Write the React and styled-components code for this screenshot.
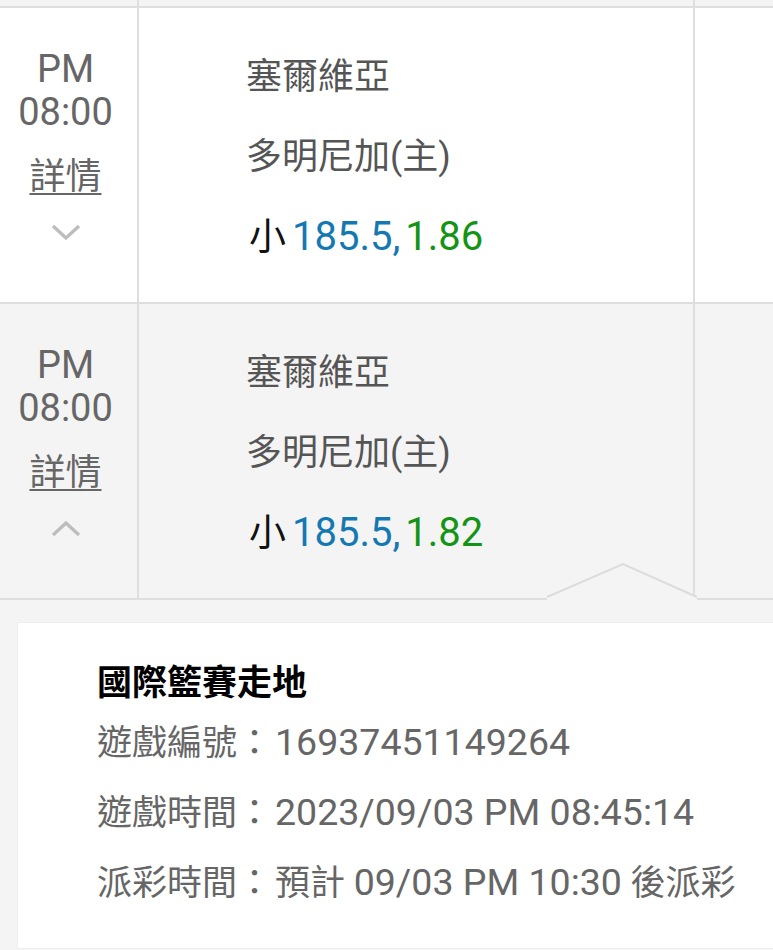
import styled, { createGlobalStyle } from 'styled-components';

const GlobalStyle = createGlobalStyle`
  html, body {
    margin: 0;
    padding: 0;
    background: #f4f4f4;
  }
  body {
    font-family: Roboto, "Noto Sans CJK TC", "Noto Sans", sans-serif;
    -webkit-font-smoothing: antialiased;
  }
`;

const rows = [
  { home: '塞爾維亞', away: '多明尼加(主)', line: '185.5', odds: '1.86', open: false },
  { home: '塞爾維亞', away: '多明尼加(主)', line: '185.5', odds: '1.82', open: true },
];

function App() {
  return (
    <Page>
      <GlobalStyle />
      <Row $shade $stub>
        <Cell />
        <Cell />
        <Cell $last />
      </Row>
      {rows.map((r, i) => (
        <Row key={i} $shade={r.open}>
          <Cell $time>
            <TimeBlock>
              <span>PM</span>
              <span>08:00</span>
            </TimeBlock>
            <Detail>詳情</Detail>
            <Chevron $up={r.open} />
          </Cell>
          <Cell>
            <Teams>
              <Team>{r.home}</Team>
              <Team>{r.away}</Team>
              <Odds>
                <span className='side'>小</span>
                <span className='line'>{r.line},</span>
                <span className='price'>{r.odds}</span>
              </Odds>
            </Teams>
          </Cell>
          <Cell $last />
        </Row>
      ))}
      <DetailArea>
        <Caret width='156' height='40' viewBox='0 0 156 40'>
          <rect x='2' y='33' width='150' height='7' fill='#f4f4f4' />
          <polygon points='2,35 78,2 152,35' fill='#f4f4f4' />
          <polyline points='2,35 78,2 152,35' fill='none' stroke='#dcdcdc' strokeWidth='2' />
        </Caret>
        <Card>
          <CardTitle>國際籃賽走地</CardTitle>
          <InfoLine>遊戲編號：<Value $lead>16937451149264</Value></InfoLine>
          <InfoLine>遊戲時間：<Value $lead>2023/09/03 PM 08:45:14</Value></InfoLine>
          <InfoLine>
            派彩時間：<Note>預計</Note> <Value>09/03 PM 10:30</Value> 後派彩
          </InfoLine>
        </Card>
      </DetailArea>
    </Page>
  );
}

function Chevron({ $up }) {
  return (
    <ChevronSvg width='32' height='20' viewBox='0 0 32 20'>
      <polyline
        points={$up ? '3,17 16,5 29,17' : '3,4 16,16 29,4'}
        fill='none'
        stroke='#bdbdbd'
        strokeWidth='3.4'
      />
    </ChevronSvg>
  );
}

export default App;

const Page = styled.div`
  width: 773px;
  min-height: 950px;
  background: #f4f4f4;
  overflow: hidden;
`;

const Row = styled.div`
  display: grid;
  grid-template-columns: 139px 556px 1fr;
  background: ${(p) => (p.$shade ? '#f4f4f4' : '#ffffff')};
  border-bottom: 2px solid #dedede;
  height: ${(p) => (p.$stub ? '6px' : 'auto')};
`;

const Cell = styled.div`
  display: flex;
  flex-direction: column;
  align-items: center;
  padding-right: ${(p) => (p.$time ? '6px' : '0')};
  border-right: ${(p) => (p.$last ? 'none' : '2px solid #dedede')};
`;

const TimeBlock = styled.div`
  display: flex;
  flex-direction: column;
  align-items: center;
  padding-top: 40px;
  color: #666;
  font-size: 38px;
  line-height: 43px;
`;

const Detail = styled.a`
  margin-top: 22px;
  color: #666;
  font-size: 36px;
  line-height: 43px;
  text-decoration: underline;
  text-decoration-thickness: 2px;
  text-underline-offset: 4px;
`;

const ChevronSvg = styled.svg`
  display: block;
  margin-top: 23px;
  margin-bottom: 24px;
`;

const Teams = styled.div`
  align-self: stretch;
  padding: 29px 0 24px 107px;
  display: flex;
  flex-direction: column;
`;

const Team = styled.div`
  font-size: 36px;
  line-height: 80px;
  color: #555;
  white-space: nowrap;
`;

const Odds = styled.div`
  font-size: 40px;
  line-height: 80px;
  padding-left: 3px;
  white-space: nowrap;
  .side {
    color: #111;
    margin-right: 6px;
    font-size: 37px;
  }
  .line {
    color: #1478b2;
    margin-right: 5px;
  }
  .price {
    color: #149414;
  }
`;

const DetailArea = styled.div`
  position: relative;
  padding: 22px 0 7px 17px;
`;

const Caret = styled.svg`
  position: absolute;
  left: 545px;
  top: -38px;
  display: block;
`;

const Card = styled.div`
  background: #fff;
  border: 1px solid #eeeeee;
  border-right: none;
  padding: 37px 0 30px 79px;
`;

const CardTitle = styled.div`
  font-size: 35px;
  font-weight: 700;
  line-height: 48px;
  color: #000;
`;

const InfoLine = styled.div`
  font-size: 35px;
  line-height: 69px;
  color: #666;
  white-space: nowrap;
`;

const Note = styled.span`
  margin-left: 3px;
`;

const Value = styled.span`
  font-size: 37.5px;
  margin-left: ${(p) => (p.$lead ? '3px' : '0')};
`;
